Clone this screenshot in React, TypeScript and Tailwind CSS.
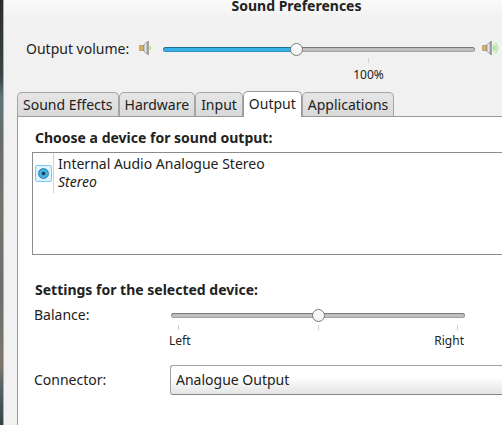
import { useState } from "react";

const tabs = ["Sound Effects", "Hardware", "Input", "Output", "Applications"];

const sliderClass =
  "block w-full h-4 appearance-none bg-transparent outline-none " +
  "[&::-webkit-slider-runnable-track]:h-[5px] [&::-webkit-slider-runnable-track]:rounded-full [&::-webkit-slider-runnable-track]:[background:var(--track)] [&::-webkit-slider-runnable-track]:shadow-[inset_0_1px_0_#00000040,inset_0_0_0_1px_#00000026] " +
  "[&::-webkit-slider-thumb]:appearance-none [&::-webkit-slider-thumb]:size-[13px] [&::-webkit-slider-thumb]:-mt-1 [&::-webkit-slider-thumb]:rounded-full [&::-webkit-slider-thumb]:border [&::-webkit-slider-thumb]:border-[#7c7c7c] [&::-webkit-slider-thumb]:bg-linear-to-b [&::-webkit-slider-thumb]:from-white [&::-webkit-slider-thumb]:to-[#f0f0f0]";

type SliderProps = {
  id: string;
  value: number;
  min: number;
  max: number;
  filled?: boolean;
  onChange: (value: number) => void;
};

const Slider = ({ id, value, min, max, filled, onChange }: SliderProps) => {
  const percent = filled ? ((value - min) / (max - min)) * 100 : 0;
  const track = `linear-gradient(to right, #38b0e8 ${percent}%, #c0c0c0 ${percent}%)`;

  return (
    <input
      id={id}
      type="range"
      min={min}
      max={max}
      step={0.5}
      value={value}
      onChange={(e) => onChange(Number(e.target.value))}
      className={sliderClass}
      style={{ "--track": track } as React.CSSProperties}
    />
  );
};

const Speaker = ({ loud }: { loud?: boolean }) => (
  <svg className="w-4 h-4 shrink-0" viewBox="0 0 16 16" fill="none" aria-hidden="true">
    <defs>
      <linearGradient id="cone" x1="0" x2="1">
        <stop offset="0" stopColor="#8a8a8a" />
        <stop offset="0.5" stopColor="#e6e6e6" />
        <stop offset="1" stopColor="#a5a5a5" />
      </linearGradient>
    </defs>
    <rect x="0.5" y="5.5" width="4" height="5" rx="0.5" fill="#f2b632" stroke="#b09a78" />
    <path d="M3.8 5.8 9 1.2V14.8L3.8 10.2Z" fill="url(#cone)" stroke="#999" strokeWidth="0.8" />
    <path d="M9.2 1V15" stroke="#8c8c8c" />
    <path d="M11 6.5Q12.2 8 11 9.5" stroke="#8be36b" strokeWidth="1.2" />
    {loud && (
      <>
        <path d="M12 4.5Q14.6 8 12 11.5" stroke="#8be36b" />
        <path d="M13.4 2.5Q17.2 8 13.4 13.5" stroke="#a0dc88" />
      </>
    )}
  </svg>
);

const Tick = () => <span className="w-px h-[5px] bg-[#d0d0d0]" />;

const App = () => {
  const [volume, setVolume] = useState(63.5);
  const [balance, setBalance] = useState(0);
  const [tab, setTab] = useState("Output");

  return (
    <div className="flex min-h-screen overflow-hidden bg-[#f1f1f1] font-['Noto_Sans',sans-serif] text-sm text-[#222]">
      <div className="w-[3px] shrink-0 bg-[linear-gradient(#2a2c2d,#3a4446_18%,#5f7478_23%,#666d6c_32%,#77736c_50%,#6d6e6b_68%,#7c756c_86%,#4f6064_92%,#384244)]" />
      <main className="flex flex-col flex-1 min-w-0 border-l border-[#adadad]">
        <header className="flex items-end justify-center h-[18px] pl-[87px] bg-linear-to-b from-[#fafafa] to-[#f2f2f2]">
          <h1 className="font-bold leading-6">Sound Preferences</h1>
        </header>

        <div className="flex pl-[22px] pr-1 pt-5 h-[73px]">
          <label htmlFor="volume" className="w-[113px] shrink-0 leading-[22px]">
            Output volume:
          </label>
          <div className="pt-0.5 w-6 shrink-0">
            <Speaker />
          </div>
          <div className="flex-1">
            <div className="pt-[3px]">
              <Slider id="volume" value={volume} min={0} max={150} filled onChange={setVolume} />
            </div>
            <div className="flex flex-col items-center pl-[99px] pt-px">
              <Tick />
              <span className="pt-0.5 text-xs leading-5">100%</span>
            </div>
          </div>
          <div className="pt-0.5 pl-[7px]">
            <Speaker loud />
          </div>
        </div>

        <div role="tablist" className="flex items-end pl-[13px]">
          {tabs.map((name) => (
            <button
              key={name}
              role="tab"
              aria-selected={tab === name}
              onClick={() => setTab(name)}
              className={
                tab === name
                  ? "h-[26px] px-[5px] pb-px -mb-px border border-b-0 border-[#999] rounded-t-[5px] bg-white relative"
                  : "h-[24px] px-[5px] border border-b-0 border-[#a5a5a5] rounded-t-[5px] bg-linear-to-b from-[#e6e6e6] to-[#d9d9d9]"
              }
            >
              {name}
            </button>
          ))}
        </div>

        <section className="flex-1 ml-[13px] pl-[14px] pt-[11px] border-l border-t border-[#999] bg-white">
          <h2 className="pl-[3px] font-bold leading-5">Choose a device for sound output:</h2>
          <div className="mt-1 h-[103px] border border-r-0 border-[#8c8c8c]">
            <label className="flex items-center h-10">
              <span className="flex items-center w-[21px] h-full pl-0.5 border-r border-[#d0d0d0]">
                <span className="flex items-center justify-center size-[17px] border border-[#7ccbf0] rounded-xs bg-[#dff3fc]">
                  <input
                    type="radio"
                    name="device"
                    defaultChecked
                    className="size-[11px] appearance-none rounded-full border border-[#2c86b0] bg-[radial-gradient(circle,#17384a_1px,#4dbdec_2.5px,#35a5d8_5px)]"
                  />
                </span>
              </span>
              <span className="flex flex-col pl-1 leading-[18px]">
                <span>Internal Audio Analogue Stereo</span>
                <em>Stereo</em>
              </span>
            </label>
          </div>

          <h2 className="pt-[25px] pl-[3px] font-bold leading-5">Settings for the selected device:</h2>
          <div className="flex pt-[5px] pl-0.5 pr-[35px]">
            <label htmlFor="balance" className="w-[135px] shrink-0 leading-5">
              Balance:
            </label>
            <div className="flex-1">
              <div className="pt-0.5 px-0.5">
                <Slider id="balance" value={balance} min={-1} max={1} onChange={setBalance} />
              </div>
              <div className="flex justify-between px-[9px] pt-0.5">
                <Tick />
                <Tick />
                <Tick />
              </div>
              <div className="flex justify-between pt-px pr-[3px] text-xs leading-5">
                <span>Left</span>
                <span>Right</span>
              </div>
            </div>
          </div>

          <div className="flex items-center pt-[14px] pl-0.5">
            <label htmlFor="connector" className="w-[136px] shrink-0">
              Connector:
            </label>
            <select
              id="connector"
              className="flex-1 h-[30px] pl-[5px] appearance-none border border-r-0 border-[#a0a0a0] border-b-[#858585] rounded-l-[3px] bg-linear-to-b from-white from-40% to-[#e4e4e4]"
            >
              <option>Analogue Output</option>
            </select>
          </div>
        </section>
      </main>
    </div>
  );
};

export default App;
